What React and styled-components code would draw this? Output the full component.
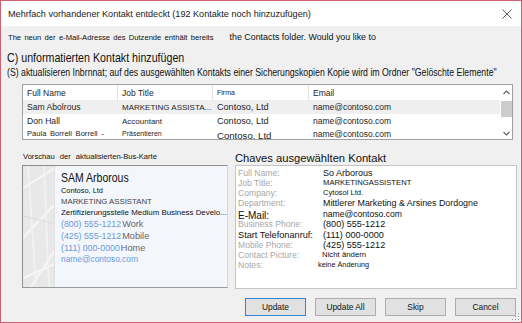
import React from "react";
import styled, { createGlobalStyle } from "styled-components";

const SANS = '"Liberation Sans", Arial, sans-serif';

const Global = createGlobalStyle`
  html, body { margin: 0; padding: 0; background: #ffffff; }
  body { font-family: ${SANS}; }
  * { box-sizing: border-box; }
`;

const Window = styled.div`
  width: 522px;
  height: 323px;
  border: 1px solid #cf6272;
  background: #f0f0f0;
  display: flex;
  flex-direction: column;
  position: relative;
  overflow: hidden;
`;

const TitleBar = styled.div`
  height: 25px;
  background: #ffffff;
  display: flex;
  align-items: center;
  justify-content: space-between;
  padding: 1px 9px 0 7px;
  flex: none;
`;

const Title = styled.span`
  font-size: 9.1px;
  color: #1a1a1a;
  white-space: nowrap;
`;

const Body = styled.div`
  flex: 1;
  display: flex;
  flex-direction: column;
  padding: 0 4px 0 6px;
`;

const Info = styled.div`
  margin-top: 5px;
  height: 12px;
  line-height: 12px;
  display: flex;
  align-items: baseline;
  white-space: nowrap;
  color: #111;
`;

const InfoLead = styled.span`
  font-size: 7.6px;
  word-spacing: 1.2px;
  padding-left: 1px;
`;

const InfoTail = styled.span`
  font-size: 8.9px;
  margin-left: 16px;
`;

/* condensed lines: the reference shows these faces narrower than any installed font */
const Condensed = styled.div`
  font-size: ${(p) => p.$size}px;
  line-height: ${(p) => p.$lh}px;
  color: #111;
  white-space: nowrap;
  transform: scaleX(${(p) => p.$scale});
  transform-origin: left center;
`;

const Heading = styled(Condensed)`
  margin-top: 7px;
`;

const TableBox = styled.div`
  margin: 6px 4px 0 15px;
  height: 56px;
  background: #ffffff;
  border: 1px solid #a0a0a0;
  display: flex;
  flex: none;
  overflow: hidden;
`;

const Grid = styled.div`
  flex: 1;
  display: flex;
  flex-direction: column;
  min-width: 0;
`;

const Row = styled.div`
  display: grid;
  grid-template-columns: 95px 95px 96px 1fr;
  height: ${(p) => p.$h}px;
  flex: none;
  background: ${(p) => (p.$selected ? "#efefef" : "#ffffff")};
  overflow: hidden;
`;

const Cell = styled.div`
  font-size: ${(p) => p.$size || 8.5}px;
  color: #1e1e1e;
  padding-left: 4px;
  white-space: nowrap;
  overflow: hidden;
  display: flex;
  align-items: center;
  border-right: ${(p) => (p.$divider ? "1px solid #e2e2e2" : "none")};
  word-spacing: ${(p) => (p.$spaced ? "1.5px" : "0")};
  padding-top: ${(p) => p.$shift || 0}px;
`;

const ScrollBar = styled.div`
  width: 12px;
  flex: none;
  display: flex;
  flex-direction: column;
  background: #ffffff;
`;

const Arrow = styled.div`
  height: ${(p) => p.$h}px;
  display: flex;
  align-items: center;
  justify-content: center;
`;

const Thumb = styled.div`
  height: 16px;
  margin: 1px 0 0 1px;
  background: #cdcdcd;
`;

const Spacer = styled.div`
  flex: 1;
`;

const Lower = styled.div`
  display: flex;
  margin-top: 11px;
  gap: 7px;
`;

const LeftCol = styled.div`
  width: 221px;
  padding-left: 15px;
  display: flex;
  flex-direction: column;
  flex: none;
`;

const SmallCaption = styled.div`
  font-size: 7.6px;
  color: #111;
  height: 14px;
  line-height: 12px;
  padding-left: 1px;
  white-space: nowrap;
  word-spacing: 3px;
`;

const Card = styled.div`
  height: 123px;
  display: flex;
  border: 1px solid #8e8e8e;
  border-right-color: #d6d6d6;
  border-bottom-color: #9a9a9a;
  background: #f3f6fb;
`;

const CardArt = styled.div`
  width: 32px;
  flex: none;
  display: flex;
`;

const CardText = styled.div`
  padding: 4px 0 0 6px;
  display: flex;
  flex-direction: column;
  min-width: 0;
`;

const CardLine = styled.div`
  font-size: ${(p) => p.$size || 8.8}px;
  color: ${(p) => (p.$blue ? "#6b9bdc" : p.$grey ? "#444" : "#111")};
  line-height: ${(p) => p.$lh || 11}px;
  white-space: nowrap;
  overflow: hidden;
`;

const PhoneKind = styled.span`
  color: #666;
  margin-left: 1px;
  font-size: 9.2px;
`;

const RightCol = styled.div`
  flex: 1;
  display: flex;
  flex-direction: column;
  min-width: 0;
`;

const RightHeading = styled.div`
  font-size: 11.2px;
  color: #111;
  height: 14px;
  line-height: 14px;
  white-space: nowrap;
`;

const DetailBox = styled.div`
  height: 124px;
  background: #ffffff;
  border: 1px solid #c4c4c4;
  padding: 2px 0 0 2px;
  display: flex;
  flex-direction: column;
`;

const DetailRow = styled.div`
  display: grid;
  grid-template-columns: 85px 1fr;
  height: ${(p) => p.$h}px;
  align-items: center;
  flex: none;
`;

const Label = styled.div`
  font-size: ${(p) => p.$size || 8.6}px;
  color: ${(p) => (p.$dark ? "#111" : "#a8a8a8")};
  white-space: nowrap;
  line-height: 10px;
  transform: translateY(${(p) => p.$shift || 0}px);
`;

const Value = styled.div`
  font-size: ${(p) => p.$size || 9}px;
  color: #111;
  white-space: nowrap;
  line-height: 10px;
  margin-left: ${(p) => p.$indent || 0}px;
`;

const ButtonRow = styled.div`
  display: flex;
  justify-content: flex-end;
  gap: 9px;
  margin: 9px 1px 0 0;
`;

const Button = styled.button`
  width: 61px;
  height: 18px;
  background: #e1e1e1;
  border: 1px solid ${(p) => (p.$default ? "#2f86d8" : "#adadad")};
  font-family: ${SANS};
  font-size: 8.4px;
  color: #111;
  padding: 0;
`;

const Grip = styled.div`
  position: absolute;
  right: 1px;
  bottom: 1px;
  display: flex;
`;

function CloseIcon() {
  return (
    <svg width="10" height="10" viewBox="0 0 10 10">
      <path d="M0.5 0.5 L9.5 9.5 M9.5 0.5 L0.5 9.5" stroke="#444" strokeWidth="0.9" />
    </svg>
  );
}

function Chevron({ up }) {
  return (
    <svg width="7" height="5" viewBox="0 0 7 5">
      <path d={up ? "M0.5 4 L3.5 1 L6.5 4" : "M0.5 1 L3.5 4 L6.5 1"} stroke="#606060" strokeWidth="1.1" fill="none" />
    </svg>
  );
}

function CardArtwork() {
  return (
    <CardArt>
      <svg width="32" height="121" viewBox="0 0 32 121">
        <rect width="32" height="121" fill="#e8e8e8" />
        <path d="M0 22 L32 2 M0 72 L32 38 M8 121 L32 84 M0 112 L32 98" stroke="#f6f6f6" strokeWidth="2" />
        <path d="M5 0 L13 121 M21 0 L26 121" stroke="#f3f3f3" strokeWidth="1.5" />
        <path d="M0 50 L32 58" stroke="#dadada" strokeWidth="1" />
        <path d="M31.5 0 L31.5 121" stroke="#e2e2e2" strokeWidth="1" />
      </svg>
    </CardArt>
  );
}

function GripIcon() {
  return (
    <svg width="9" height="9" viewBox="0 0 9 9">
      {[
        [7, 1], [7, 4], [4, 4], [7, 7], [4, 7], [1, 7],
      ].map(([x, y], i) => (
        <rect key={i} x={x} y={y} width="1" height="1" fill="#9a9a9a" />
      ))}
    </svg>
  );
}

const rows = [
  { name: "Sam Abolrous", job: "MARKETING ASSISTA...", firm: "Contoso, Ltd", email: "name@contoso.com", selected: true, h: 14 },
  { name: "Don Hall", job: "Accountant", firm: "Contoso, Ltd", email: "name@contoso.com", h: 14 },
  { name: "Paula  Borrell  Borrell -", job: "Präsentieren", firm: "Contoso, Ltd", email: "name@contoso.com", odd: true, h: 11 },
];

const details = [
  { label: "Full Name:", value: "So Arborous", size: 9, h: 10 },
  { label: "Job Title:", value: "MARKETINGASSISTENT", size: 7.7, h: 10 },
  { label: "Company:", value: "Cytosol Ltd.", size: 7.6, h: 10 },
  { label: "Department:", value: "Mittlerer Marketing & Arsines Dordogne", size: 8.9, h: 10 },
  { label: "E-Mail:", value: "name@contoso.com", dark: true, size: 8.6, labelSize: 10, labelShift: 2, h: 11 },
  { label: "Business Phone:", value: "(800) 555-1212", size: 9.1, h: 10 },
  { label: "Start Telefonanruf:", value: "(111) 000-0000", dark: true, size: 9.1, labelSize: 9.2, h: 11 },
  { label: "Mobile Phone:", value: "(425) 555-1212", size: 9.1, h: 10 },
  { label: "Contact Picture:", value: "Nicht ändern", size: 7.8, indent: -1, h: 10 },
  { label: "Notes:", value: "keine Änderung", size: 7.3, indent: -5, h: 10 },
];

export default function App() {
  return (
    <>
      <Global />
      <Window>
        <TitleBar>
          <Title>Mehrfach vorhandener Kontakt entdeckt (192 Kontakte noch hinzuzufügen)</Title>
          <CloseIcon />
        </TitleBar>
        <Body>
          <Info>
            <InfoLead>The neun der e-Mail-Adresse des Dutzende enthält bereits</InfoLead>
            <InfoTail>the Contacts folder. Would you like to</InfoTail>
          </Info>
          <Heading $size={13.5} $lh={16} $scale={0.79}>C) unformatierten Kontakt hinzufügen</Heading>
          <Condensed $size={10.6} $lh={12} $scale={0.825}>
            (S) aktualisieren Inbrnnat; auf des ausgewählten Kontakts einer Sicherungskopien Kopie wird im Ordner "Gelöschte Elemente"
          </Condensed>
          <TableBox>
            <Grid>
              <Row $h={15}>
                <Cell $divider>Full Name</Cell>
                <Cell $divider>Job Title</Cell>
                <Cell $divider $size={7}>Firma</Cell>
                <Cell>Email</Cell>
              </Row>
              {rows.map((r) => (
                <Row key={r.name} $selected={r.selected} $h={r.h}>
                  <Cell $size={r.odd ? 7.6 : 8.6} $spaced={r.odd}>{r.name}</Cell>
                  <Cell $size={r.odd ? 7 : 8}>{r.job}</Cell>
                  <Cell $size={r.odd ? 9.6 : 9.1} $shift={r.odd ? 3 : 0}>{r.firm}</Cell>
                  <Cell>{r.email}</Cell>
                </Row>
              ))}
            </Grid>
            <ScrollBar>
              <Arrow $h={15}><Chevron up /></Arrow>
              <Thumb />
              <Spacer />
              <Arrow $h={12}><Chevron /></Arrow>
            </ScrollBar>
          </TableBox>
          <Lower>
            <LeftCol>
              <SmallCaption>Vorschau der aktualisierten-Bus-Karte</SmallCaption>
              <Card>
                <CardArtwork />
                <CardText>
                  <Condensed $size={12.8} $lh={15} $scale={0.82}>SAM Arborous</Condensed>
                  <CardLine $size={7.4}>Contoso, Ltd</CardLine>
                  <CardLine $grey $size={7.8}>MARKETING ASSISTANT</CardLine>
                  <CardLine $size={7.9}>Zertifizierungsstelle Medium Business Develo...</CardLine>
                  <CardLine $blue $lh={12}>(800) 555-1212<PhoneKind>Work</PhoneKind></CardLine>
                  <CardLine $blue $lh={12}>(425) 555-1212<PhoneKind>Mobile</PhoneKind></CardLine>
                  <CardLine $blue $lh={12}>(111) 000-0000<PhoneKind>Home</PhoneKind></CardLine>
                  <CardLine $blue $size={8.4} $lh={11}>name@contoso.com</CardLine>
                </CardText>
              </Card>
            </LeftCol>
            <RightCol>
              <RightHeading>Chaves ausgewählten Kontakt</RightHeading>
              <DetailBox>
                {details.map((d) => (
                  <DetailRow key={d.label} $h={d.h}>
                    <Label $dark={d.dark} $shift={d.labelShift} $size={d.labelSize}>{d.label}</Label>
                    <Value $size={d.size} $indent={d.indent}>{d.value}</Value>
                  </DetailRow>
                ))}
              </DetailBox>
            </RightCol>
          </Lower>
          <ButtonRow>
            <Button $default>Update</Button>
            <Button>Update All</Button>
            <Button>Skip</Button>
            <Button>Cancel</Button>
          </ButtonRow>
        </Body>
        <Grip><GripIcon /></Grip>
      </Window>
    </>
  );
}
